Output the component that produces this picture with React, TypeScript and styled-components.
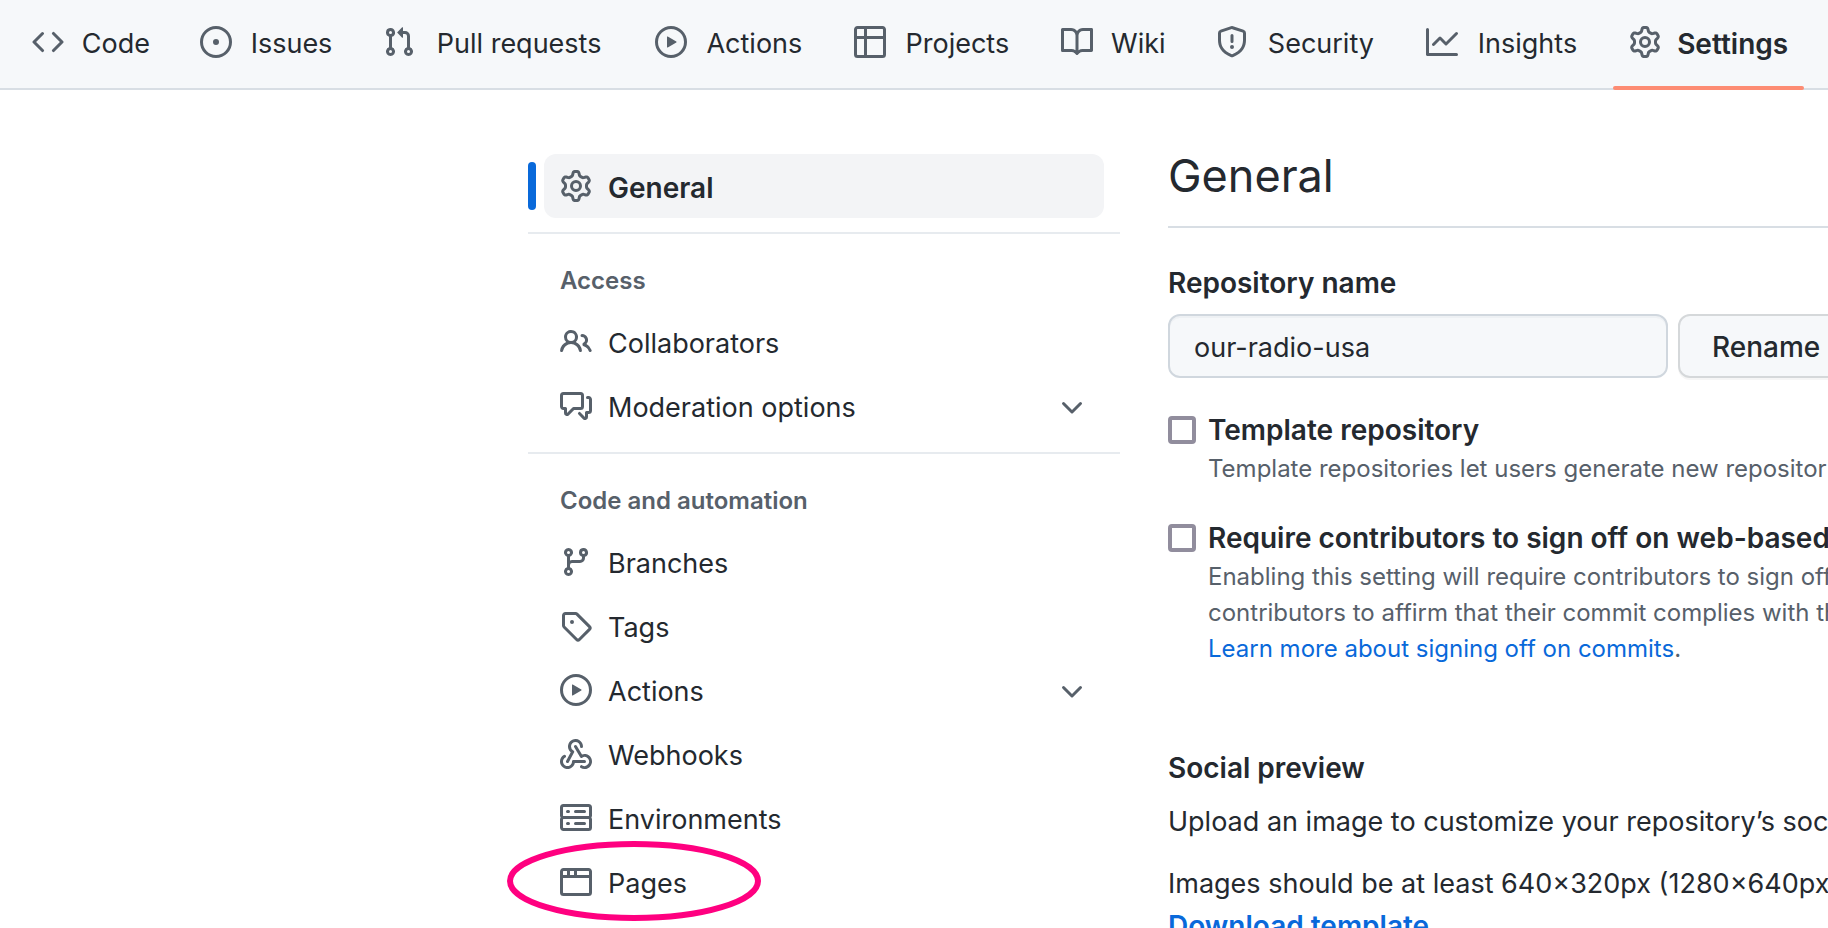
import React from "react";
import styled, { createGlobalStyle, css } from "styled-components";

const GlobalStyle = createGlobalStyle`
  *, *::before, *::after { box-sizing: border-box; }
  body {
    margin: 0;
    background: #ffffff;
    color: #24292f;
    font-family: Inter, "Liberation Sans", sans-serif;
    font-size: 27px;
    line-height: 42px;
  }
`;

const paths = {
  code: "M4.72 3.22a.75.75 0 011.06 1.06L2.06 8l3.72 3.72a.75.75 0 11-1.06 1.06L.47 8.53a.75.75 0 010-1.06l4.25-4.25zm6.56 0a.75.75 0 10-1.06 1.06L13.94 8l-3.72 3.72a.75.75 0 101.06 1.06l4.25-4.25a.75.75 0 000-1.06l-4.25-4.25z",
  issue:
    "M8 9.5a1.5 1.5 0 100-3 1.5 1.5 0 000 3zM8 0a8 8 0 100 16A8 8 0 008 0zM1.5 8a6.5 6.5 0 1113 0 6.5 6.5 0 01-13 0z",
  pull: "M7.177 3.073L9.573.677A.25.25 0 0110 .854v4.792a.25.25 0 01-.427.177L7.177 3.427a.25.25 0 010-.354zM3.75 2.5a.75.75 0 100 1.5.75.75 0 000-1.5zm-2.25.75a2.25 2.25 0 113 2.122v5.256a2.251 2.251 0 11-1.5 0V5.372A2.25 2.25 0 011.5 3.25zM11 2.5h-1V4h1a1 1 0 011 1v5.628a2.251 2.251 0 101.5 0V5A2.5 2.5 0 0011 2.5zm1 10.25a.75.75 0 111.5 0 .75.75 0 01-1.5 0zM3.75 12a.75.75 0 100 1.5.75.75 0 000-1.5z",
  play: "M1.5 8a6.5 6.5 0 1113 0 6.5 6.5 0 01-13 0zM8 0a8 8 0 100 16A8 8 0 008 0zM6.379 5.227A.25.25 0 006 5.442v5.117a.25.25 0 00.379.214l4.264-2.559a.25.25 0 000-.428L6.379 5.227z",
  table:
    "M0 1.75C0 .784.784 0 1.75 0h12.5C15.216 0 16 .784 16 1.75v12.5A1.75 1.75 0 0114.25 16H1.75A1.75 1.75 0 010 14.25V1.75zM1.5 6.5v7.75c0 .138.112.25.25.25H5v-8H1.5zM5 5H1.5V1.75a.25.25 0 01.25-.25H5V5zm1.5 1.5v8h7.75a.25.25 0 00.25-.25V6.5h-8zM14.5 5h-8V1.5h7.75a.25.25 0 01.25.25V5z",
  book: "M0 1.75A.75.75 0 01.75 1h4.253c1.227 0 2.317.59 3 1.501A3.744 3.744 0 0111.006 1h4.245a.75.75 0 01.75.75v10.5a.75.75 0 01-.75.75h-4.507a2.25 2.25 0 00-1.591.659l-.622.621a.75.75 0 01-1.06 0l-.622-.621A2.25 2.25 0 005.258 13H.75a.75.75 0 01-.75-.75V1.75zm8.755 3a2.25 2.25 0 012.25-2.25H14.5v9h-3.757c-.71 0-1.4.201-1.992.572l.004-7.322zm-1.504 7.324l.004-5.073-.002-2.253A2.25 2.25 0 005.003 2.5H1.5v9h3.757a3.75 3.75 0 011.994.574z",
  shield:
    "M7.467.133a1.75 1.75 0 011.066 0l5.25 1.68A1.75 1.75 0 0115 3.48V7c0 1.566-.32 3.182-1.303 4.682-.983 1.498-2.585 2.813-5.032 3.855a1.7 1.7 0 01-1.33 0c-2.447-1.042-4.049-2.357-5.032-3.855C1.32 10.182 1 8.566 1 7V3.48a1.75 1.75 0 011.217-1.667l5.25-1.68zm.61 1.429a.25.25 0 00-.153 0l-5.25 1.68a.25.25 0 00-.174.238V7c0 1.358.275 2.666 1.057 3.86.784 1.194 2.121 2.34 4.366 3.297a.2.2 0 00.154 0c2.245-.956 3.582-2.104 4.366-3.298C13.225 9.666 13.5 8.36 13.5 7V3.48a.25.25 0 00-.174-.237l-5.25-1.68zM9 10.5a1 1 0 11-2 0 1 1 0 012 0zm-.25-5.75a.75.75 0 10-1.5 0v3a.75.75 0 001.5 0v-3z",
  graph:
    "M1.5 1.75a.75.75 0 00-1.5 0v12.5c0 .414.336.75.75.75h14.5a.75.75 0 000-1.5H1.5V1.75zm14.28 2.53a.75.75 0 00-1.06-1.06L10 7.94 7.53 5.47a.75.75 0 00-1.06 0L3.22 8.72a.75.75 0 001.06 1.06L7 7.06l2.47 2.47a.75.75 0 001.06 0l5.25-5.25z",
  gear: "M7.429 1.525a6.593 6.593 0 011.142 0c.036.003.108.036.137.146l.289 1.105c.147.56.55.967.997 1.189.174.086.341.183.501.29.417.278.97.423 1.53.27l1.102-.303c.11-.03.175.016.195.046.219.31.41.641.573.989.014.031.022.11-.059.19l-.815.806c-.411.406-.562.957-.53 1.456a4.588 4.588 0 010 .582c-.032.499.119 1.05.53 1.456l.815.806c.08.08.073.159.059.19a6.494 6.494 0 01-.573.99c-.02.029-.086.074-.195.045l-1.103-.303c-.559-.153-1.112-.008-1.529.27-.16.107-.327.204-.5.29-.449.222-.851.628-.998 1.189l-.289 1.105c-.029.11-.101.143-.137.146a6.613 6.613 0 01-1.142 0c-.036-.003-.108-.037-.137-.146l-.289-1.105c-.147-.56-.55-.967-.997-1.189a4.502 4.502 0 01-.501-.29c-.417-.278-.97-.423-1.53-.27l-1.102.303c-.11.03-.175-.016-.195-.046a6.492 6.492 0 01-.573-.989c-.014-.031-.022-.11.059-.19l.815-.806c.411-.406.562-.957.53-1.456a4.587 4.587 0 010-.582c.032-.499-.119-1.05-.53-1.456l-.815-.806c-.08-.08-.073-.159-.059-.19a6.44 6.44 0 01.573-.99c.02-.029.086-.075.195-.045l1.103.303c.559.153 1.112.008 1.529-.27.16-.107.327-.204.5-.29.449-.222.851-.628.998-1.189l.289-1.105c.029-.11.101-.143.137-.146zM8 0c-.236 0-.47.01-.701.03-.743.065-1.29.615-1.458 1.261l-.29 1.106c-.017.066-.078.158-.211.224a5.994 5.994 0 00-.668.386c-.123.082-.233.09-.3.071L3.27 2.776c-.644-.177-1.392.02-1.82.63a7.977 7.977 0 00-.704 1.217c-.315.675-.111 1.422.363 1.891l.815.806c.05.048.098.147.088.294a6.084 6.084 0 000 .772c.01.147-.038.246-.088.294l-.815.806c-.474.469-.678 1.216-.363 1.891.2.428.436.835.704 1.218.428.609 1.176.806 1.82.63l1.103-.303c.066-.019.176-.011.299.071.213.143.436.272.668.386.133.066.194.158.212.224l.289 1.106c.169.646.715 1.196 1.458 1.26a8.094 8.094 0 001.402 0c.743-.064 1.29-.614 1.458-1.26l.29-1.106c.017-.066.078-.158.211-.224a5.98 5.98 0 00.668-.386c.123-.082.233-.09.3-.071l1.102.302c.644.177 1.392-.02 1.82-.63.268-.382.505-.789.704-1.217.315-.675.111-1.422-.364-1.891l-.814-.806c-.05-.048-.098-.147-.088-.294a6.1 6.1 0 000-.772c-.01-.147.039-.246.088-.294l.814-.806c.475-.469.679-1.216.364-1.891a7.992 7.992 0 00-.704-1.218c-.428-.609-1.176-.806-1.82-.63l-1.103.303c-.066.019-.176.011-.299-.071a5.991 5.991 0 00-.668-.386c-.133-.066-.194-.158-.212-.224L10.16 1.29C9.99.645 9.444.095 8.701.031A8.094 8.094 0 008 0zm1.5 8a1.5 1.5 0 11-3 0 1.5 1.5 0 013 0zM11 8a3 3 0 11-6 0 3 3 0 016 0z",
  people:
    "M5.5 3.5a2 2 0 100 4 2 2 0 000-4zM2 5.5a3.5 3.5 0 115.898 2.549 5.507 5.507 0 013.034 4.084.75.75 0 11-1.482.235 4.001 4.001 0 00-7.9 0 .75.75 0 01-1.482-.236A5.507 5.507 0 013.102 8.05 3.49 3.49 0 012 5.5zM11 4a.75.75 0 100 1.5 1.5 1.5 0 01.666 2.844.75.75 0 00-.416.672v.352a.75.75 0 00.574.73c1.2.289 2.162 1.2 2.522 2.372a.75.75 0 101.434-.44 5.01 5.01 0 00-2.56-3.012A3 3 0 0011 4z",
  discussion:
    "M1.5 2.75a.25.25 0 01.25-.25h8.5a.25.25 0 01.25.25v5.5a.25.25 0 01-.25.25h-3.5a.75.75 0 00-.53.22L3.5 11.44V9.25a.75.75 0 00-.75-.75h-1a.25.25 0 01-.25-.25v-5.5zM1.75 1A1.75 1.75 0 000 2.75v5.5C0 9.216.784 10 1.75 10H2v1.543a1.457 1.457 0 002.487 1.03L7.061 10h3.189A1.75 1.75 0 0012 8.25v-5.5A1.75 1.75 0 0010.25 1h-8.5zM14.5 4.75a.25.25 0 00-.25-.25h-.5a.75.75 0 110-1.5h.5c.966 0 1.75.784 1.75 1.75v5.5A1.75 1.75 0 0114.25 12H14v1.543a1.457 1.457 0 01-2.487 1.03L9.22 12.28a.75.75 0 111.06-1.06l2.22 2.22v-2.19a.75.75 0 01.75-.75h1a.25.25 0 00.25-.25v-5.5z",
  branch:
    "M11.75 2.5a.75.75 0 100 1.5.75.75 0 000-1.5zm-2.25.75a2.25 2.25 0 113 2.122V6A2.5 2.5 0 0110 8.5H6a1 1 0 00-1 1v1.128a2.251 2.251 0 11-1.5 0V5.372a2.25 2.25 0 111.5 0v1.836A2.492 2.492 0 016 7h4a1 1 0 001-1v-.628A2.25 2.25 0 019.5 3.25zM4.25 12a.75.75 0 100 1.5.75.75 0 000-1.5zM3.5 3.25a.75.75 0 111.5 0 .75.75 0 01-1.5 0z",
  tag: "M2.5 7.775V2.75a.25.25 0 01.25-.25h5.025a.25.25 0 01.177.073l6.25 6.25a.25.25 0 010 .354l-5.025 5.025a.25.25 0 01-.354 0l-6.25-6.25a.25.25 0 01-.073-.177zm-1.5 0V2.75C1 1.784 1.784 1 2.75 1h5.025c.464 0 .91.184 1.238.513l6.25 6.25a1.75 1.75 0 010 2.474l-5.026 5.026a1.75 1.75 0 01-2.474 0l-6.25-6.25A1.75 1.75 0 011 7.775zM6 5a1 1 0 100 2 1 1 0 000-2z",
  webhook:
    "M5.5 4.25a2.25 2.25 0 014.5 0 .75.75 0 001.5 0 3.75 3.75 0 10-6.14 2.889l-2.272 4.258a.75.75 0 001.324.706L7 7.25a.75.75 0 00-.309-1.015A2.25 2.25 0 015.5 4.25zM7.364 3.607a.75.75 0 011.03.257l2.608 4.349a3.75 3.75 0 11-.628 6.785.75.75 0 01.752-1.299 2.25 2.25 0 10-.033-3.88.75.75 0 01-1.03-.256L7.107 4.636a.75.75 0 01.257-1.03zM2.9 8.776A.75.75 0 012.625 9.8 2.25 2.25 0 106 11.75a.75.75 0 01.75-.751h5.5a.75.75 0 010 1.5H7.425a3.751 3.751 0 11-5.55-3.998.75.75 0 011.024.274z",
  server:
    "M1.75 1A1.75 1.75 0 000 2.75v4c0 .372.116.717.314 1a1.742 1.742 0 00-.314 1v4c0 .966.784 1.75 1.75 1.75h12.5A1.75 1.75 0 0016 12.75v-4c0-.372-.116-.717-.314-1 .198-.283.314-.628.314-1v-4A1.75 1.75 0 0014.25 1H1.75zm0 7.5a.25.25 0 00-.25.25v4c0 .138.112.25.25.25h12.5a.25.25 0 00.25-.25v-4a.25.25 0 00-.25-.25H1.75zM1.5 2.75a.25.25 0 01.25-.25h12.5a.25.25 0 01.25.25v4a.25.25 0 01-.25.25H1.75a.25.25 0 01-.25-.25v-4zm5.5 2A.75.75 0 017.75 4h4.5a.75.75 0 010 1.5h-4.5A.75.75 0 017 4.75zM7.75 10a.75.75 0 000 1.5h4.5a.75.75 0 000-1.5h-4.5zM3 4.75A.75.75 0 013.75 4h.5a.75.75 0 010 1.5h-.5A.75.75 0 013 4.75zM3.75 10a.75.75 0 000 1.5h.5a.75.75 0 000-1.5h-.5z",
  browser:
    "M0 2.75C0 1.784.784 1 1.75 1h12.5c.966 0 1.75.784 1.75 1.75v10.5A1.75 1.75 0 0114.25 15H1.75A1.75 1.75 0 010 13.25V2.75zm1.75-.25a.25.25 0 00-.25.25V4.5h2v-2h-1.75zM5 2.5v2h2v-2H5zm3.5 0v2h6V2.75a.25.25 0 00-.25-.25H8.5zm6 3.5h-13v7.25c0 .138.112.25.25.25h12.5a.25.25 0 00.25-.25V6z",
  chevron:
    "M12.78 6.22a.75.75 0 010 1.06l-4.25 4.25a.75.75 0 01-1.06 0L3.22 7.28a.75.75 0 011.06-1.06L8 9.94l3.72-3.72a.75.75 0 011.06 0z",
};

type IconName = keyof typeof paths;

const IconSvg = styled.svg`
  flex: none;
  width: 32px;
  height: 32px;
  fill: #57606a;
`;

const Icon = ({ name }: { name: IconName }) => (
  <IconSvg viewBox="0 0 16 16" aria-hidden="true">
    <path fillRule="evenodd" d={paths[name]} />
  </IconSvg>
);

const strongText = css`
  font-size: 28px;
  font-weight: 600;
`;

const Page = styled.div`
  display: flex;
  flex-direction: column;
  height: 100vh;
  overflow: hidden;
`;

const RepoNav = styled.nav`
  flex: none;
  display: flex;
  gap: 16px;
  padding: 0 16px;
  background: #f6f8fa;
  box-shadow: inset 0 -2px 0 #d8dee4;
`;

const Tab = styled.a<{ $current?: boolean }>`
  position: relative;
  display: flex;
  align-items: center;
  gap: 16px;
  padding: 21px 16px 27px;
  color: #24292f;
  text-decoration: none;
  white-space: nowrap;
  ${(p) =>
    p.$current &&
    css`
      ${strongText}
      &::after {
        content: "";
        position: absolute;
        right: 0;
        bottom: 0;
        left: 0;
        height: 4px;
        border-radius: 6px;
        background: #fd8c73;
      }
    `}
`;

/* Reserves the width of the bold label so tabs keep their place when selected. */
const TabLabel = styled.span`
  display: grid;
  justify-items: center;
  padding-top: 4px;
  line-height: 38px;
  &::before {
    content: attr(data-content);
    height: 0;
    ${strongText}
    visibility: hidden;
  }
`;

const Columns = styled.div`
  flex: 1;
  display: grid;
  grid-template-columns: 592px minmax(0, 1fr);
  gap: 48px;
  padding: 48px 0 0 528px;
`;

const Sidebar = styled.nav`
  padding-top: 16px;
`;

const NavGroup = styled.section`
  & + & {
    margin-top: 14px;
    border-top: 2px solid #e7ebef;
  }
`;

const NavTitle = styled.h3`
  margin: 0;
  padding: 29px 32px 11px;
  color: #57606a;
  font-size: 24px;
  font-weight: 600;
  line-height: 36px;
`;

const NavList = styled.ul`
  margin: 0;
  padding: 0 16px;
  list-style: none;
`;

const NavItem = styled.li`
  position: relative;
`;

const itemStyle = css<{ $current?: boolean }>`
  display: flex;
  align-items: center;
  gap: 16px;
  width: 100%;
  padding: 11px 16px;
  border: 0;
  border-radius: 12px;
  background: none;
  color: #24292f;
  font: inherit;
  text-align: left;
  text-decoration: none;
  ${(p) =>
    p.$current &&
    css`
      background: #f3f4f6;
      ${strongText}
      &::before {
        content: "";
        position: absolute;
        top: 8px;
        bottom: 8px;
        left: -16px;
        width: 8px;
        border-radius: 6px;
        background: #0969da;
      }
    `}
`;

const ItemLink = styled.a<{ $current?: boolean }>`
  ${itemStyle}
`;

const ItemButton = styled.button`
  ${itemStyle}
`;

const ItemLabel = styled.span`
  flex: 1;
  padding-top: 4px;
  line-height: 38px;
`;

/* Hand-drawn style marker that circles one entry. */
const Marker = styled.svg`
  position: absolute;
  top: -9px;
  left: -37px;
  width: 254px;
  height: 80px;
  fill: none;
  stroke: #ff0080;
  stroke-width: 6px;
  pointer-events: none;
`;

const Main = styled.main`
  min-width: 0;
  overflow: hidden;
  white-space: nowrap;
`;

const Title = styled.h1`
  margin: 0 0 34px;
  padding: 2px 0 14px;
  border-bottom: 2px solid #d8dee4;
  font-size: 45px;
  font-weight: 400;
  line-height: 72px;
`;

const FieldLabel = styled.label`
  display: block;
  margin-bottom: 10px;
  ${strongText}
`;

const FieldRow = styled.div`
  display: flex;
  gap: 10px;
  margin-bottom: 31px;
`;

const TextInput = styled.input`
  flex: none;
  width: 500px;
  height: 64px;
  padding: 2px 24px 0;
  border: 2px solid #d0d7de;
  border-radius: 12px;
  background: #f6f8fa;
  box-shadow: inset 0 2px 0 rgba(208, 215, 222, 0.2);
  color: #24292f;
  font: inherit;
`;

const Button = styled.button`
  flex: none;
  height: 64px;
  padding: 2px 32px 0;
  border: 2px solid #d5d8da;
  border-radius: 12px;
  background: #f6f8fa;
  box-shadow: 0 2px 0 rgba(27, 31, 36, 0.04);
  color: #24292f;
  font: inherit;
  font-size: 28px;
  font-weight: 500;
`;

const Option = styled.div`
  display: grid;
  grid-template-columns: 28px minmax(0, 1fr);
  column-gap: 12px;
  align-items: center;
  margin-bottom: 30px;
`;

const Checkbox = styled.input`
  appearance: none;
  width: 28px;
  height: 28px;
  margin: 0;
  border: 4px solid #918d9d;
  border-radius: 4px;
  background: #ffffff;
`;

const OptionLabel = styled.label`
  ${strongText}
`;

const Hint = styled.p`
  grid-column: 2;
  margin: 0;
  color: #57606a;
  font-size: 24px;
  line-height: 36px;
`;

const Link = styled.a<{ $strong?: boolean }>`
  color: #0969da;
  text-decoration: none;
  ${(p) => p.$strong && strongText}
`;

const Social = styled.section`
  margin-top: 80px;
`;

const SectionTitle = styled.h2`
  margin: 0 0 12px;
  line-height: 42px;
  ${strongText}
`;

const Paragraph = styled.p`
  margin: 0 0 20px;
`;

const tabs: { icon: IconName; label: string; current?: boolean }[] = [
  { icon: "code", label: "Code" },
  { icon: "issue", label: "Issues" },
  { icon: "pull", label: "Pull requests" },
  { icon: "play", label: "Actions" },
  { icon: "table", label: "Projects" },
  { icon: "book", label: "Wiki" },
  { icon: "shield", label: "Security" },
  { icon: "graph", label: "Insights" },
  { icon: "gear", label: "Settings", current: true },
];

type Entry = {
  icon: IconName;
  label: string;
  current?: boolean;
  expandable?: boolean;
  marked?: boolean;
};

const groups: { title?: string; entries: Entry[] }[] = [
  { entries: [{ icon: "gear", label: "General", current: true }] },
  {
    title: "Access",
    entries: [
      { icon: "people", label: "Collaborators" },
      { icon: "discussion", label: "Moderation options", expandable: true },
    ],
  },
  {
    title: "Code and automation",
    entries: [
      { icon: "branch", label: "Branches" },
      { icon: "tag", label: "Tags" },
      { icon: "play", label: "Actions", expandable: true },
      { icon: "webhook", label: "Webhooks" },
      { icon: "server", label: "Environments" },
      { icon: "browser", label: "Pages", marked: true },
    ],
  },
];

const SidebarEntry = ({ entry }: { entry: Entry }) => (
  <NavItem>
    {entry.expandable ? (
      <ItemButton type="button" aria-expanded={false}>
        <Icon name={entry.icon} />
        <ItemLabel>{entry.label}</ItemLabel>
        <Icon name="chevron" />
      </ItemButton>
    ) : (
      <ItemLink
        href="#"
        $current={entry.current}
        aria-current={entry.current ? "page" : undefined}
      >
        <Icon name={entry.icon} />
        <ItemLabel>{entry.label}</ItemLabel>
      </ItemLink>
    )}
    {entry.marked && (
      <Marker viewBox="0 0 254 80" aria-hidden="true">
        <ellipse cx="127" cy="40" rx="124" ry="37" />
      </Marker>
    )}
  </NavItem>
);

export default function App() {
  return (
    <>
      <GlobalStyle />
      <Page>
        <RepoNav aria-label="Repository">
          {tabs.map((tab) => (
            <Tab
              key={tab.label}
              href="#"
              $current={tab.current}
              aria-current={tab.current ? "page" : undefined}
            >
              <Icon name={tab.icon} />
              <TabLabel data-content={tab.label}>{tab.label}</TabLabel>
            </Tab>
          ))}
        </RepoNav>
        <Columns>
          <Sidebar aria-label="Settings">
            {groups.map((group, i) => (
              <NavGroup key={i}>
                {group.title && <NavTitle>{group.title}</NavTitle>}
                <NavList>
                  {group.entries.map((entry) => (
                    <SidebarEntry key={entry.label} entry={entry} />
                  ))}
                </NavList>
              </NavGroup>
            ))}
          </Sidebar>
          <Main>
            <Title>General</Title>
            <FieldLabel htmlFor="repo-name">Repository name</FieldLabel>
            <FieldRow>
              <TextInput id="repo-name" type="text" defaultValue="our-radio-usa" />
              <Button type="button">Rename</Button>
            </FieldRow>
            <Option>
              <Checkbox id="template" type="checkbox" />
              <OptionLabel htmlFor="template">Template repository</OptionLabel>
              <Hint>Template repositories let users generate new repositories</Hint>
            </Option>
            <Option>
              <Checkbox id="signoff" type="checkbox" />
              <OptionLabel htmlFor="signoff">
                Require contributors to sign off on web-based commits
              </OptionLabel>
              <Hint>
                Enabling this setting will require contributors to sign off on
                <br />
                contributors to affirm that their commit complies with the
                <br />
                <Link href="#">Learn more about signing off on commits</Link>.
              </Hint>
            </Option>
            <Social>
              <SectionTitle>Social preview</SectionTitle>
              <Paragraph>
                Upload an image to customize your repository’s social media preview.
              </Paragraph>
              <Paragraph>
                Images should be at least 640×320px (1280×640px for best display).
                <br />
                <Link href="#" $strong>
                  Download template
                </Link>
              </Paragraph>
            </Social>
          </Main>
        </Columns>
      </Page>
    </>
  );
}
